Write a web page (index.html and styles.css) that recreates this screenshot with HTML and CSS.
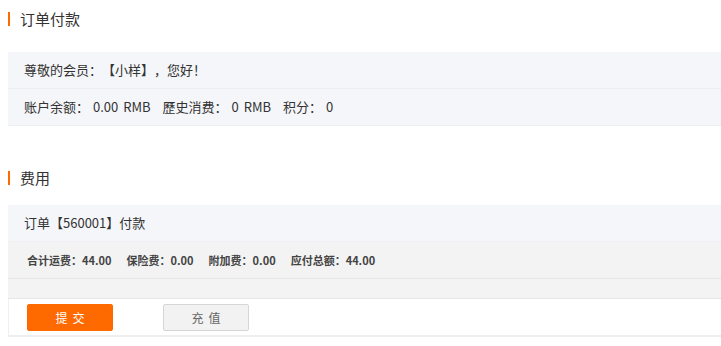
FILE: index.html
```html
<!DOCTYPE html>
<html>
<head>
<meta charset="utf-8">
<link rel="stylesheet" href="styles.css">
</head>
<body>
<div class="page">
  <h2 class="title">订单付款</h2>
  <div class="box">
    <div class="row row-light">尊敬的会员：【小样】，您好！</div>
    <div class="row row-light row-acct">账户余额：<span class="gap"></span>0.00 RMB<span class="sp"></span>歷史消费：<span class="gap"></span>0 RMB<span class="sp"></span>积分：<span class="gap"></span>0</div>
  </div>
  <h2 class="title title-2">费用</h2>
  <div class="box box-2">
    <div class="row row-light">订单【560001】付款</div>
    <div class="row row-gray row-bold">合计运费：44.00<span class="sp"></span>保险费：0.00<span class="sp"></span>附加费：0.00<span class="sp"></span>应付总额：44.00</div>
    <div class="row row-gray row-empty"></div>
    <div class="row row-actions">
      <button class="btn btn-primary">提交</button>
      <button class="btn btn-default">充值</button>
    </div>
  </div>
</div>
</body>
</html>
```
FILE: styles.css
```css
html, body {
  margin: 0;
  padding: 0;
  background: #fff;
}
body {
  font-family: "Noto Sans CJK SC", "Noto Sans", sans-serif;
  color: #333;
  text-spacing-trim: space-all;
}
.page {
  padding-left: 8px;
  padding-top: 12px;
}
.title {
  margin: 0;
  font-size: 15px;
  font-weight: normal;
  line-height: 14px;
  height: 14px;
  border-left: 2px solid #ff6a00;
  padding-left: 10px;
  color: #333;
}
.title-2 {
  margin-top: 45px;
}
.box {
  margin-top: 26px;
}
.box-2 {
  margin-top: 20px;
}
.row {
  height: 36px;
  line-height: 36px;
  padding-left: 16px;
  font-size: 13px;
  border-bottom: 1px solid #eceef1;
  white-space: nowrap;
}
.row-acct {
  word-spacing: 2px;
}
.row-light {
  background: #f5f6f9;
}
.row-gray {
  background: #f3f3f3;
  border-bottom-color: #e6e6e6;
}
.row-bold {
  font-weight: bold;
  font-size: 11px;
  padding-left: 19px;
  color: #444;
}
.row-empty {
  height: 19px;
}
.row-actions {
  background: #fff;
  border-left: 1px solid #f0f0f0;
  border-bottom: 2px solid #eeeeee;
  padding-left: 18px;
  display: flex;
  align-items: center;
  gap: 50px;
}
.sp {
  display: inline-block;
  width: 12px;
}
.gap {
  display: inline-block;
  width: 4px;
}
.row-bold .sp {
  width: 15px;
}
.btn {
  width: 86px;
  height: 27px;
  font-family: inherit;
  font-size: 12px;
  border-radius: 2px;
  padding: 0 0 0 5px;
  letter-spacing: 5px;
  line-height: 25px;
  cursor: pointer;
}
.btn-primary {
  background: #ff6a00;
  border: 1px solid #ff6a00;
  color: #fff;
}
.btn-default {
  background: #f2f2f2;
  border: 1px solid #d6d6d6;
  color: #666;
  width: 86px;
}
```
